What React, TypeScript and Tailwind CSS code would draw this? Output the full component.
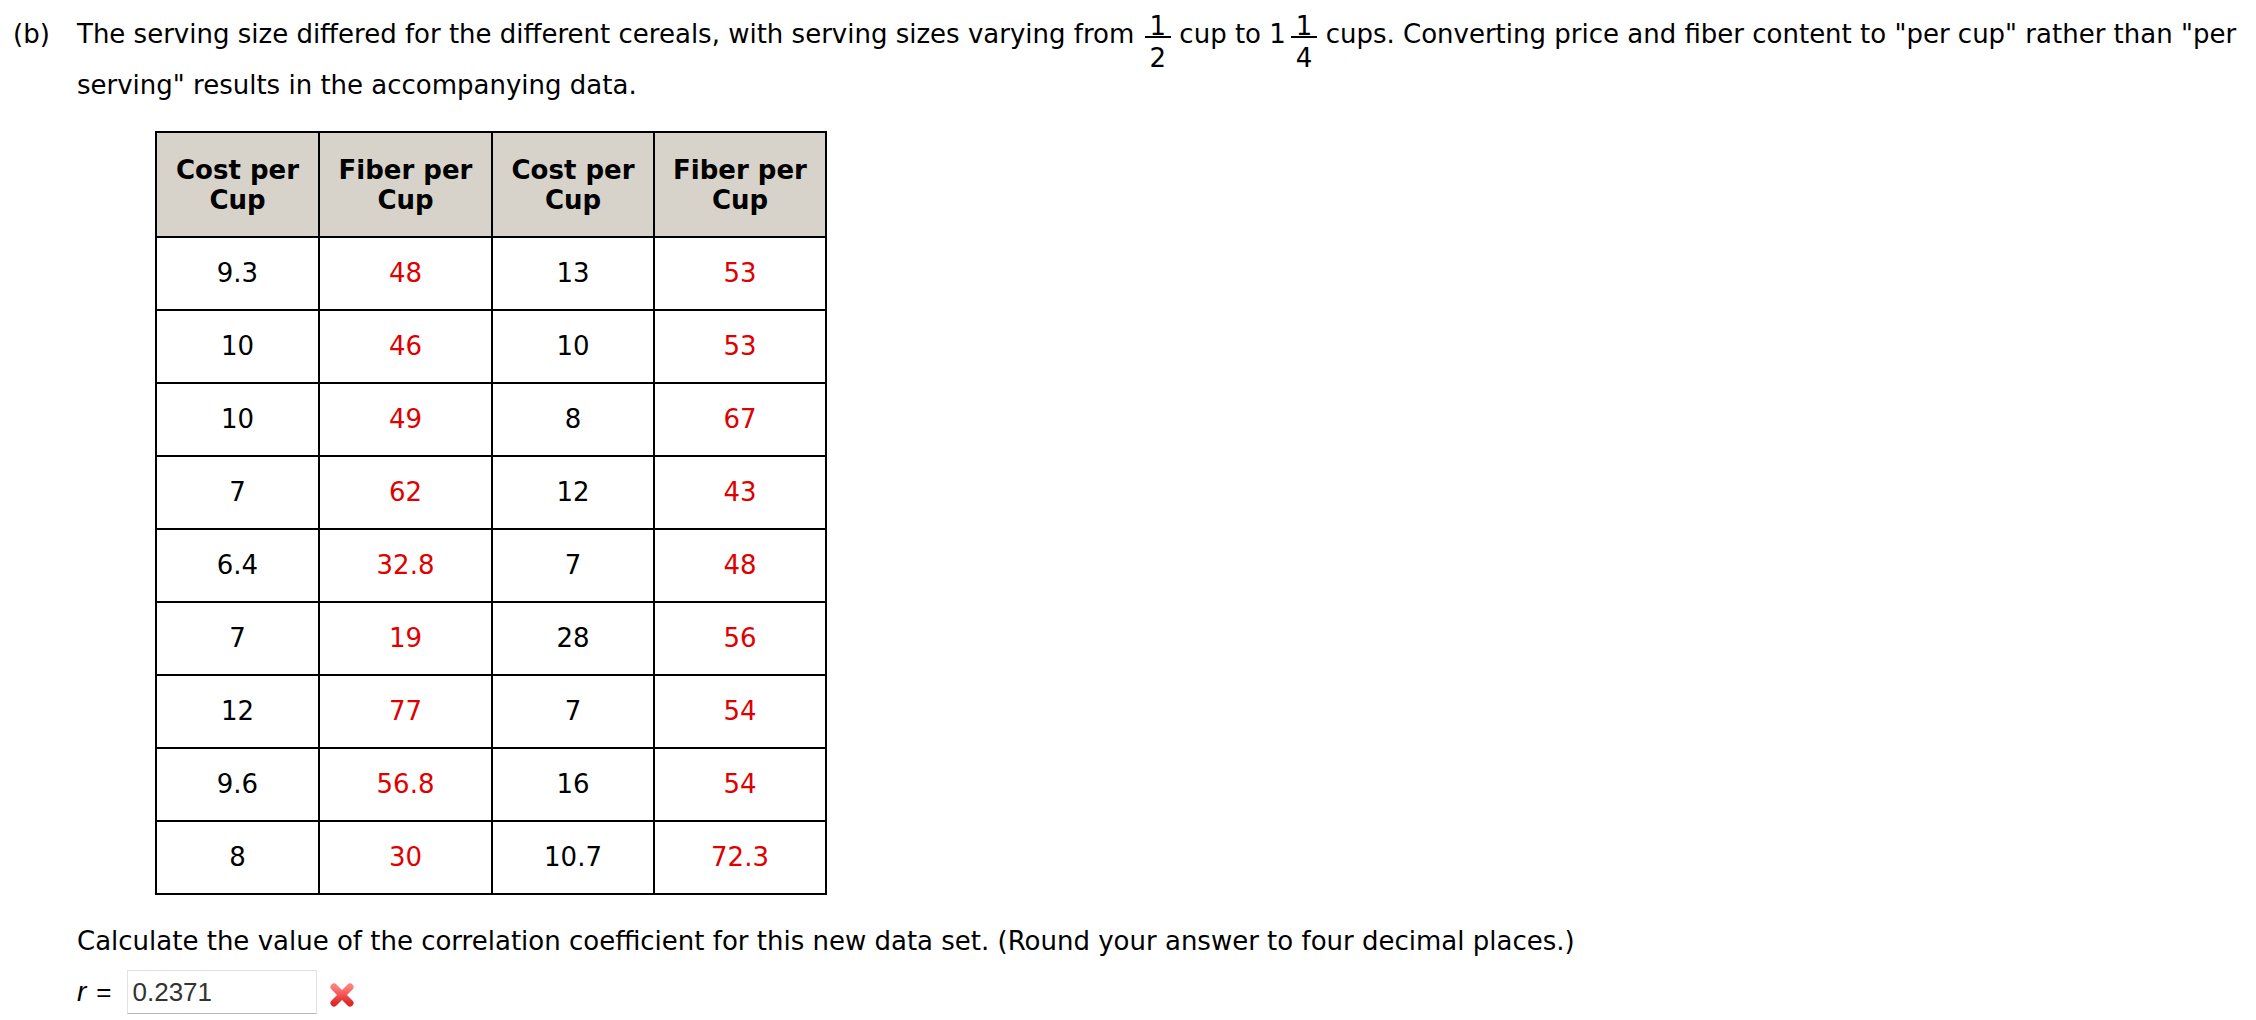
const rows = [
  ['9.3', '48', '13', '53'],
  ['10', '46', '10', '53'],
  ['10', '49', '8', '67'],
  ['7', '62', '12', '43'],
  ['6.4', '32.8', '7', '48'],
  ['7', '19', '28', '56'],
  ['12', '77', '7', '54'],
  ['9.6', '56.8', '16', '54'],
  ['8', '30', '10.7', '72.3'],
]

const headers = [
  { label: 'Cost per', w: 'w-[163px]' },
  { label: 'Fiber per', w: 'w-[173px]' },
  { label: 'Cost per', w: 'w-[162px]' },
  { label: 'Fiber per', w: 'w-[172px]' },
]

function Frac({ num, den, ml }: { num: string; den: string; ml: string }) {
  return (
    <span className={`${ml} inline-flex flex-col items-stretch text-center align-[8px]`}>
      <span className="h-[20px] px-[5px] leading-[20px]">{num}</span>
      <span className="h-[2px] bg-black" />
      <span className="mt-[10px] h-[20px] px-[5px] leading-[20px]">{den}</span>
    </span>
  )
}

function RedX() {
  return (
    <svg width="28" height="28" viewBox="0 0 28 28">
      <defs>
        <linearGradient id="xg" x1="0" y1="0" x2="0" y2="1">
          <stop offset="0" stopColor="#ff7d7d" />
          <stop offset="1" stopColor="#e02a2a" />
        </linearGradient>
      </defs>
      <path d="M6 6 L22 22 M22 6 L6 22" stroke="url(#xg)" strokeWidth="7" strokeLinecap="round" />
    </svg>
  )
}

export default function App() {
  return (
    <div className="min-h-screen bg-white font-['DejaVu_Sans',sans-serif] text-[26px] text-black">
      <div className="flex items-baseline pt-[16px]">
        <div className="w-[77px] shrink-0 pl-[13px] leading-[26px]">(b)</div>
        <div>
          {/* Intro */}
          <div className="whitespace-nowrap leading-[26px]">
            The serving size differed for the different cereals, with serving sizes varying from{' '}
            <Frac num="1" den="2" ml="ml-[2px]" /> cup to 1<Frac num="1" den="4" ml="ml-[5px]" /> cups.
            Converting price and fiber content to "per cup" rather than "per
          </div>
          <div className="mt-[4px] whitespace-nowrap leading-[26px]">
            serving" results in the accompanying data.
          </div>

          {/* Data table */}
          <table className="mt-[33px] ml-[78px] w-[670px] table-fixed border-collapse border-2 border-black text-center">
            <thead>
              <tr>
                {headers.map((h, i) => (
                  <th
                    key={i}
                    className={`${h.w} h-[105px] border-2 border-black bg-[#d7d3ca] align-middle font-bold leading-[30px]`}
                  >
                    {h.label}
                    <br />
                    Cup
                  </th>
                ))}
              </tr>
            </thead>
            <tbody>
              {rows.map((r, i) => (
                <tr key={i}>
                  {r.map((v, j) => (
                    <td
                      key={j}
                      className={`h-[73px] border-2 border-black align-middle ${j % 2 === 1 ? 'text-[#e00000]' : ''}`}
                    >
                      {v}
                    </td>
                  ))}
                </tr>
              ))}
            </tbody>
          </table>

          <div className="mt-[33px] whitespace-nowrap leading-[26px]">
            Calculate the value of the correlation coefficient for this new data set. (Round your answer to four
            decimal places.)
          </div>

          {/* Answer */}
          <div className="mt-[16px] flex items-center">
            <span className="font-['Liberation_Sans',sans-serif] text-[28px] italic">r</span>
            <span className="ml-[10px] font-['Liberation_Sans',sans-serif] text-[26px]">=</span>
            <div className="ml-[15px] flex h-[44px] w-[190px] items-center border border-[#e2e2e2] border-b-[#b8b8b8] pl-[5px] font-['Liberation_Sans',sans-serif] text-[26px] text-[#333]">
              0.2371
            </div>
            <span className="ml-[11px] mt-[6px]">
              <RedX />
            </span>
          </div>
        </div>
      </div>
    </div>
  )
}
